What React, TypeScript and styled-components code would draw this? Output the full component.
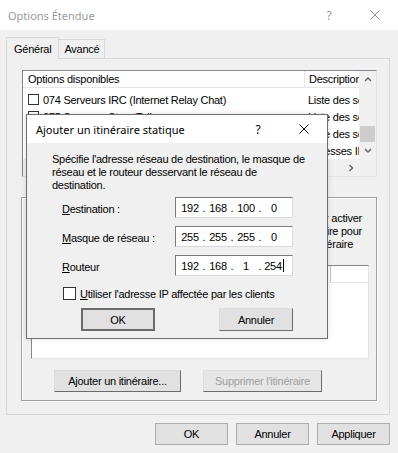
import React from 'react';
import styled, { createGlobalStyle, css } from 'styled-components';

const GlobalStyle = createGlobalStyle`
  html, body {
    margin: 0;
    padding: 0;
    background: #f0f0f0;
  }
  body {
    font-family: 'Liberation Sans', Arial, sans-serif;
    font-size: 11px;
    letter-spacing: -0.25px;
    color: #000;
  }
  * {
    box-sizing: border-box;
  }
`;

const options = [
  { name: '074 Serveurs IRC (Internet Relay Chat)', description: 'Liste des serveurs IRC disponibles' },
  { name: '075 Serveurs StreetTalk', description: 'Liste des serveurs StreetTalk' },
  { name: '076 Serveurs STDA', description: 'Liste des serveurs STDA' },
  { name: '121 Itinéraires statiques sans classe', description: 'Adresses IP de destination' },
];

function CloseIcon({ color }: { color: string }) {
  return (
    <svg width="10" height="10" viewBox="0 0 10 10">
      <path d="M0.5 0.5 L9.5 9.5 M9.5 0.5 L0.5 9.5" stroke={color} strokeWidth="1" fill="none" />
    </svg>
  );
}

function Chevron({ dir }: { dir: 'up' | 'down' | 'left' | 'right' }) {
  const paths = {
    up: 'M1 5 L4 2 L7 5',
    down: 'M1 2 L4 5 L7 2',
    left: 'M5 1 L2 4 L5 7',
    right: 'M2.5 1 L5.5 4 L2.5 7',
  };
  return (
    <svg width="8" height="8" viewBox="0 0 8 8">
      <path d={paths[dir]} stroke="#606060" strokeWidth="1.4" fill="none" />
    </svg>
  );
}

function IpAddress({ octets, caret }: { octets: string[]; caret?: boolean }) {
  return (
    <IpBox>
      {octets.map((o, i) => (
        <React.Fragment key={i}>
          {i > 0 && <Dot>.</Dot>}
          <Octet>
            {o}
            {caret && i === 3 && <Caret />}
          </Octet>
        </React.Fragment>
      ))}
    </IpBox>
  );
}

export default function App() {
  return (
    <>
      <GlobalStyle />
      <Window>
        <TitleBar>
          <WindowTitle>Options Étendue</WindowTitle>
          <CaptionButton $color="#999">?</CaptionButton>
          <CaptionButton $color="#999">
            <CloseIcon color="#8c8c8c" />
          </CaptionButton>
        </TitleBar>

        <Body>
          <TabStrip>
            <Tab $active>Général</Tab>
            <Tab>Avancé</Tab>
          </TabStrip>

          <TabPanel>
            <ListView>
              <ListContent>
                <ListHeader>
                  <HeaderCell $width={282}>Options disponibles</HeaderCell>
                  <HeaderCell>Description</HeaderCell>
                </ListHeader>
                <Rows>
                  {options.map((o) => (
                    <Row key={o.name}>
                      <NameCell>
                        <SmallCheck />
                        {o.name}
                      </NameCell>
                      <DescCell>{o.description}</DescCell>
                    </Row>
                  ))}
                </Rows>
              </ListContent>
              <VScroll>
                <ScrollArrow>
                  <Chevron dir="up" />
                </ScrollArrow>
                <VTrack>
                  <VThumb />
                </VTrack>
                <ScrollArrow>
                  <Chevron dir="down" />
                </ScrollArrow>
              </VScroll>
              <HScroll>
                <ScrollArrow>
                  <Chevron dir="left" />
                </ScrollArrow>
                <HTrack />
                <ScrollArrow>
                  <Chevron dir="right" />
                </ScrollArrow>
              </HScroll>
              <ScrollCorner />
            </ListView>

            <GroupBox>
              <Hint>
                <HintLine>Cochez la case en regard d'un itinéraire pour activer</HintLine>
                <HintLine>ou désactiver l'utilisation de l'itinéraire pour</HintLine>
                <HintLine $inset={9}>les clients de cet itinéraire</HintLine>
              </Hint>
              <RouteList>
                <RouteHeader>
                  <RouteHeaderCell $width={299}>Destination</RouteHeaderCell>
                  <RouteHeaderCell />
                </RouteHeader>
              </RouteList>
              <GroupButtons>
                <Button $variant="raised" $width={127}>
                  Ajouter un itinéraire...
                </Button>
                <Button $variant="raised" $width={119} disabled>
                  Supprimer l'itinéraire
                </Button>
              </GroupButtons>
            </GroupBox>
          </TabPanel>

          <FooterButtons>
            <Button $variant="flat" $width={73}>
              OK
            </Button>
            <Button $variant="flat" $width={73}>
              Annuler
            </Button>
            <Button $variant="flat" $width={73}>
              Appliquer
            </Button>
          </FooterButtons>
        </Body>

        <Dialog>
          <DialogTitleBar>
            <DialogTitle>Ajouter un itinéraire statique</DialogTitle>
            <CaptionButton $color="#000" $height={28}>
              ?
            </CaptionButton>
            <CaptionButton $color="#000" $height={28}>
              <CloseIcon color="#000" />
            </CaptionButton>
          </DialogTitleBar>
          <DialogBody>
            <Description>
              Spécifie l'adresse réseau de destination, le masque de
              <br />
              réseau et le routeur desservant le réseau de
              <br />
              destination.
            </Description>
            <Form>
              <Label>
                <u>D</u>estination :
              </Label>
              <IpAddress octets={['192', '168', '100', '0']} />
              <Label>
                <u>M</u>asque de réseau :
              </Label>
              <IpAddress octets={['255', '255', '255', '0']} />
              <Label>
                <u>R</u>outeur
              </Label>
              <IpAddress octets={['192', '168', '1', '254']} caret />
            </Form>
            <CheckRow>
              <Check />
              <span>
                <u>U</u>tiliser l'adresse IP affectée par les clients
              </span>
            </CheckRow>
            <DialogButtons>
              <Button $variant="default" $width={74} $height={23}>
                OK
              </Button>
              <Button $variant="raised" $width={74} $height={23}>
                Annuler
              </Button>
            </DialogButtons>
          </DialogBody>
        </Dialog>
      </Window>
    </>
  );
}

const Window = styled.div`
  position: relative;
  width: 398px;
  height: 453px;
  overflow: hidden;
  background: #f0f0f0;
  display: flex;
  flex-direction: column;
`;

const TitleBar = styled.div`
  height: 30px;
  flex: none;
  background: #fff;
  display: flex;
  align-items: center;
  padding-left: 8px;
`;

const WindowTitle = styled.div`
  flex: 1;
  font-family: 'Noto Sans', sans-serif;
  font-size: 11px;
  letter-spacing: 0;
  color: #999;
`;

const CaptionButton = styled.div<{ $color: string; $height?: number }>`
  width: 46px;
  height: ${(p) => p.$height ?? 30}px;
  display: flex;
  align-items: center;
  justify-content: center;
  font-family: 'Noto Sans', sans-serif;
  font-size: 12px;
  letter-spacing: 0;
  color: ${(p) => p.$color};
`;

const Body = styled.div`
  flex: 1;
  display: flex;
  flex-direction: column;
  padding: 8px 8px 0 6px;
`;

const TabStrip = styled.div`
  height: 20px;
  display: flex;
  align-items: flex-end;
  position: relative;
  z-index: 1;
`;

const Tab = styled.div<{ $active?: boolean }>`
  display: flex;
  align-items: center;
  justify-content: center;
  border: 1px solid #d9d9d9;
  border-bottom: none;
  background: #f0f0f0;
  ${(p) =>
    p.$active
      ? css`
          height: 22px;
          margin-bottom: -1px;
          padding: 0 7px;
          position: relative;
          z-index: 2;
        `
      : css`
          height: 19px;
          margin-left: -1px;
          padding: 0 5px;
        `}
`;

const TabPanel = styled.div`
  height: 357px;
  border: 1px solid #d9d9d9;
  padding: 11px 0 0 15px;
  display: flex;
  flex-direction: column;
`;

const ListView = styled.div`
  width: 355px;
  height: 107px;
  display: grid;
  grid-template-columns: 1fr 17px;
  grid-template-rows: 1fr 17px;
  border: 1px solid;
  border-color: #828790 #e3e3e3 #e3e3e3 #828790;
  background: #fff;
`;

const ListContent = styled.div`
  overflow: hidden;
  white-space: nowrap;
`;

const ListHeader = styled.div`
  height: 17px;
  display: flex;
  border-bottom: 1px solid #e5e5e5;
`;

const HeaderCell = styled.div<{ $width?: number }>`
  flex: none;
  width: ${(p) => (p.$width ? `${p.$width}px` : 'auto')};
  padding-left: ${(p) => (p.$width ? 5 : 4)}px;
  display: flex;
  align-items: center;
  ${(p) => p.$width && 'border-right: 1px solid #e5e5e5;'}
`;

const Rows = styled.div`
  padding-top: 3px;
`;

const Row = styled.div`
  height: 17px;
  display: flex;
  align-items: center;
`;

const NameCell = styled.div`
  width: 282px;
  flex: none;
  display: flex;
  align-items: center;
  gap: 4px;
  padding-left: 5px;
`;

const DescCell = styled.div`
  padding-left: 3px;
`;

const SmallCheck = styled.span`
  width: 11px;
  height: 11px;
  border: 1px solid #333;
  background: #fff;
  flex: none;
`;

const VScroll = styled.div`
  background: #f0f0f0;
  display: flex;
  flex-direction: column;
`;

const ScrollArrow = styled.div`
  width: 17px;
  height: 17px;
  flex: none;
  display: flex;
  align-items: center;
  justify-content: center;
`;

const VTrack = styled.div`
  flex: 1;
  display: flex;
  flex-direction: column;
  justify-content: flex-end;
`;

const VThumb = styled.div`
  height: 16px;
  margin: 0 1px;
  background: #cdcdcd;
`;

const HScroll = styled.div`
  background: #f0f0f0;
  display: flex;
`;

const HTrack = styled.div`
  flex: 1;
`;

const ScrollCorner = styled.div`
  background: #f0f0f0;
`;

const GroupBox = styled.div`
  width: 356px;
  height: 204px;
  margin: 20px 0 0 -1px;
  border: 1px solid #a0a0a0;
  box-shadow: inset 1px 1px 0 #fff, 1px 1px 0 #fff;
  padding: 14px 0 0 9px;
  display: flex;
  flex-direction: column;
`;

const Hint = styled.div`
  width: 331px;
  line-height: 13px;
  text-align: right;
  white-space: nowrap;
`;

const HintLine = styled.div<{ $inset?: number }>`
  padding-right: ${(p) => p.$inset ?? 0}px;
`;

const RouteList = styled.div`
  width: 338px;
  height: 94px;
  margin-top: 14px;
  background: #fff;
  border: 1px solid;
  border-color: #828790 #e3e3e3 #e3e3e3 #828790;
`;

const RouteHeader = styled.div`
  height: 17px;
  display: flex;
  border-bottom: 1px solid #e5e5e5;
`;

const RouteHeaderCell = styled.div<{ $width?: number }>`
  width: ${(p) => (p.$width ? `${p.$width}px` : 'auto')};
  flex: ${(p) => (p.$width ? 'none' : 1)};
  padding-left: 5px;
  display: flex;
  align-items: center;
  ${(p) => p.$width && 'border-right: 1px solid #c8c8c8;'}
`;

const GroupButtons = styled.div`
  display: flex;
  gap: 22px;
  margin-top: 11px;
  padding-left: 23px;
`;

const Button = styled.button<{ $variant: 'flat' | 'raised' | 'default'; $width: number; $height?: number }>`
  width: ${(p) => p.$width}px;
  height: ${(p) => p.$height ?? 22}px;
  padding: 0;
  font: inherit;
  letter-spacing: inherit;
  color: #000;
  background: #e1e1e1;
  border: 1px solid #adadad;
  ${(p) =>
    p.$variant === 'raised' &&
    css`
      border-color: #dcdcdc #6b6b6b #6b6b6b #dcdcdc;
    `}
  ${(p) =>
    p.$variant === 'default' &&
    css`
      border: 2px solid #6b6b6b;
    `}
  &:disabled {
    color: #a0a0a0;
    background: #e6e6e6;
  }
`;

const FooterButtons = styled.div`
  display: flex;
  justify-content: flex-end;
  gap: 8px;
  margin-top: 8px;
`;

const Dialog = styled.div`
  position: absolute;
  left: 26px;
  top: 114px;
  width: 302px;
  height: 225px;
  border: 1px solid #6e6e6e;
  background: #f0f0f0;
  box-shadow: 0 0 6px rgba(0, 0, 0, 0.12);
  display: flex;
  flex-direction: column;
`;

const DialogTitleBar = styled.div`
  height: 28px;
  flex: none;
  background: #fff;
  display: flex;
  align-items: center;
  padding-left: 9px;
`;

const DialogTitle = styled.div`
  flex: 1;
  font-family: 'Noto Sans', sans-serif;
  font-size: 11px;
  letter-spacing: 0;
  color: #000;
`;

const DialogBody = styled.div`
  padding: 10px 0 0 25px;
  display: flex;
  flex-direction: column;
`;

const Description = styled.p`
  margin: 0;
  line-height: 13px;
  white-space: nowrap;
`;

const Form = styled.div`
  display: grid;
  grid-template-columns: 113px 118px;
  row-gap: 8px;
  align-items: center;
  margin: 5px 0 0 10px;
`;

const Label = styled.div`
  padding-top: 2px;
`;

const IpBox = styled.div`
  width: 118px;
  height: 21px;
  display: flex;
  align-items: center;
  padding-left: 3px;
  background: #fff;
  border: 1px solid;
  border-color: #7a7a7a #dadada #dadada #7a7a7a;
`;

const Octet = styled.span`
  width: 22px;
  text-align: center;
  display: inline-flex;
  justify-content: center;
  align-items: center;
`;

const Dot = styled.span`
  width: 6px;
  text-align: center;
`;

const Caret = styled.span`
  width: 1px;
  height: 13px;
  background: #000;
  margin-left: 1px;
`;

const CheckRow = styled.label`
  display: flex;
  align-items: center;
  gap: 4px;
  margin: 11px 0 0 11px;
`;

const Check = styled.span`
  width: 13px;
  height: 13px;
  flex: none;
  border: 1px solid #333;
  background: #fff;
`;

const DialogButtons = styled.div`
  width: 212px;
  display: flex;
  justify-content: space-between;
  margin: 8px 0 0 29px;
`;
